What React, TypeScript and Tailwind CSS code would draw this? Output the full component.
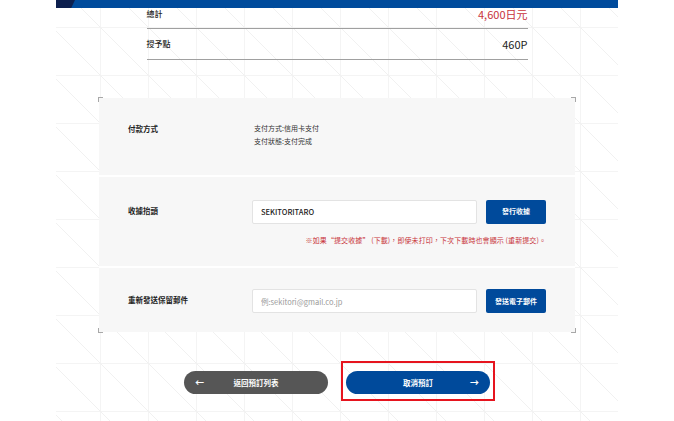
import { useState } from "react";

function Corner({ pos }: { pos: string }) {
  return <span className={`absolute w-[5px] h-[5px] border-[#a8a8a8] ${pos}`} />;
}

export default function App() {
  const [title, setTitle] = useState("SEKITORITARO");
  const [mail, setMail] = useState("");

  return (
    <div className="w-full h-[421px] overflow-hidden bg-white flex justify-center font-['Noto_Sans_CJK_TC','Noto_Sans',sans-serif]">
      <div className="w-[562px] h-full flex flex-col items-center bg-white bg-[linear-gradient(45deg,transparent_49.3%,#f1f1f1_49.3%,#f1f1f1_50.7%,transparent_50.7%),linear-gradient(#f4f4f4_1px,transparent_1px),linear-gradient(90deg,#f4f4f4_1px,transparent_1px)] bg-size-[48px_48px] bg-position-[44px_27px]">
        {/* header bar */}
        <div className="w-full h-[8px] flex bg-[#004b9c] shrink-0">
          <div className="w-[19px] h-full bg-[#0c1f4e] [clip-path:polygon(0_0,100%_0,80%_100%,0_100%)]" />
        </div>

        {/* summary rows */}
        <div className="w-[381px] flex flex-col">
          <div className="h-[21px] flex justify-between items-start border-b border-[#a0a0a0]">
            <span className="text-[8px] leading-[12px] text-[#222] font-medium">總計</span>
            <span className="text-[11px] leading-[12px] text-[#c8323a]">4,600日元</span>
          </div>
          <div className="h-[31px] flex justify-between items-center border-b border-[#a0a0a0]">
            <span className="text-[8px] text-[#222] font-medium">授予點</span>
            <span className="text-[11px] text-[#222]">460P</span>
          </div>
        </div>

        {/* details panel */}
        <div className="relative mt-[38px] w-[476px] flex flex-col gap-[2px] bg-white">
          <Corner pos="-top-px -left-px border-t border-l" />
          <Corner pos="-top-px -right-px border-t border-r" />
          <Corner pos="-bottom-px -left-px border-b border-l" />
          <Corner pos="-bottom-px -right-px border-b border-r" />

          <section className="h-[77px] bg-[#f7f7f7] flex items-start pt-[24px] px-[29px]">
            <div className="w-[126px] text-[7.5px] leading-[13px] font-bold text-[#222]">付款方式</div>
            <div className="text-[7px] leading-[13px] text-[#333]">
              <p>支付方式:信用卡支付</p>
              <p>支付狀態:支付完成</p>
            </div>
          </section>

          <section className="h-[89px] bg-[#f7f7f7] flex items-center px-[29px]">
            <div className="w-[126px] text-[7.5px] font-bold text-[#222] self-start mt-[28px]">收據抬頭</div>
            <div className="flex flex-col items-end mt-[1px]">
              <div className="flex gap-[9px]">
                <input
                  value={title}
                  onChange={(e) => setTitle(e.target.value)}
                  className="w-[225px] h-[24px] bg-white border border-[#e3e3e3] rounded-[2px] px-[8px] text-[7.5px] font-medium text-[#222] outline-none"
                />
                <button className="w-[60px] h-[24px] bg-[#004a9b] rounded-[2px] text-white text-[7px] font-bold">
                  發行收據
                </button>
              </div>
              <p className="mt-[11px] text-[7px] leading-[10px] text-[#c8333a] tracking-[0.1px]">
                ※如果“提交收據” (下載)，即使未打印，下次下載時也會顯示 (重新提交)。
              </p>
            </div>
          </section>

          <section className="h-[64px] bg-[#f7f7f7] flex items-center px-[29px]">
            <div className="w-[126px] text-[7.5px] font-bold text-[#222]">重新發送保留郵件</div>
            <div className="flex gap-[9px] mt-[2px]">
              <input
                value={mail}
                onChange={(e) => setMail(e.target.value)}
                placeholder="例:sekitori@gmail.co.jp"
                className="w-[225px] h-[24px] bg-white border border-[#e3e3e3] rounded-[2px] px-[8px] text-[7.5px] text-[#222] placeholder:text-[#9a9a9a] outline-none"
              />
              <button className="w-[60px] h-[24px] bg-[#004a9b] rounded-[2px] text-white text-[7px] font-bold">
                發送電子郵件
              </button>
            </div>
          </section>
        </div>

        {/* actions */}
        <div className="mt-[39px] flex gap-[18px]">
          <button className="relative w-[144px] h-[23px] rounded-full bg-[#565656] text-white text-[7.5px] font-bold flex items-center justify-center">
            <span className="absolute left-[11px] text-[9px] leading-none">←</span>
            返回預訂列表
          </button>
          <div className="relative">
            <div className="absolute -left-[5px] -right-[5px] -top-[10px] -bottom-[7px] border-2 border-[#e6141e]" />
            <button className="relative w-[144px] h-[23px] rounded-full bg-[#004a9b] text-white text-[7.5px] font-bold flex items-center justify-center">
              取消預訂
              <span className="absolute right-[11px] text-[9px] leading-none">→</span>
            </button>
          </div>
        </div>
      </div>
    </div>
  );
}
